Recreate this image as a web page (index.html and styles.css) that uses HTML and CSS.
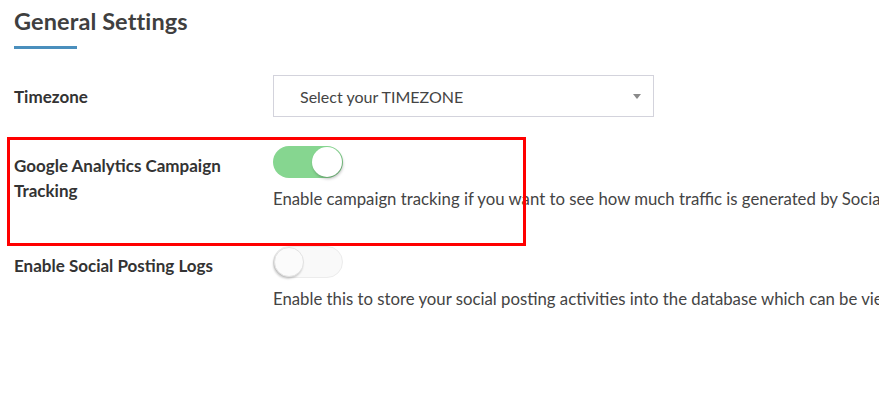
FILE: index.html
```html
<!DOCTYPE html>
<html>
<head>
<meta charset="utf-8">
<link rel="stylesheet" href="styles.css">
</head>
<body>
<div class="page">
  <h2 class="title">General Settings</h2>
  <div class="title-rule"></div>

  <div class="row row-select">
    <div class="label">Timezone</div>
    <div class="field">
      <div class="select">
        <span class="select-text">Select your TIMEZONE</span>
        <span class="select-arrow"></span>
      </div>
    </div>
  </div>

  <div class="row row-toggle row-ga">
    <div class="label">Google Analytics Campaign<br>Tracking</div>
    <div class="field">
      <div class="toggle on"><span class="knob"></span></div>
      <div class="desc">Enable campaign tracking if you want to see how much traffic is generated by Social Auto Poster and how it performs.</div>
    </div>
  </div>

  <div class="row row-toggle row-logs">
    <div class="label">Enable Social Posting Logs</div>
    <div class="field">
      <div class="toggle off"><span class="knob"></span></div>
      <div class="desc">Enable this to store your social posting activities into the database which can be viewed from the logs page.</div>
    </div>
  </div>
</div>
<div class="highlight"></div>
</body>
</html>
```

FILE: styles.css
```css
html, body {
  margin: 0;
  padding: 0;
  background: #ffffff;
  overflow: hidden;
}
body {
  font-family: "Lato", "Liberation Sans", sans-serif;
  color: #333;
  width: 879px;
  height: 417px;
  position: relative;
}
.page {
  padding: 0 0 0 14px;
}
.title {
  margin: 0;
  padding-top: 7px;
  font-size: 23.5px;
  line-height: 28px;
  font-weight: 700;
  color: #3f3f3f;
  letter-spacing: 0.1px;
}
.title-rule {
  width: 63px;
  height: 3px;
  background: #4a8fbd;
  margin-top: 11px;
}
.row {
  display: grid;
  grid-template-columns: 259px 1fr;
}
.row-select {
  margin-top: 26px;
  align-items: center;
}
.row-ga {
  margin-top: 29px;
}
.row-logs {
  margin-top: 35px;
}
.label {
  font-size: 17px;
  font-weight: 700;
  line-height: 25px;
  color: #333;
}
.row-toggle .label {
  padding-top: 7px;
}
.field {
  min-width: 0;
}
.select {
  height: 40px;
  border: 1px solid #d3d3dc;
  display: flex;
  align-items: center;
  justify-content: space-between;
  padding: 0 12px 0 26px;
  box-sizing: content-box;
  width: 341px;
}
.select-text {
  font-size: 16px;
  color: #444;
}
.select-arrow {
  width: 0;
  height: 0;
  border-left: 4px solid transparent;
  border-right: 4px solid transparent;
  border-top: 5px solid #8a8a8a;
}
.toggle {
  width: 70px;
  height: 32px;
  border-radius: 16px;
  box-sizing: border-box;
  display: flex;
  align-items: center;
  padding: 1px;
}
.toggle.on {
  background: #86d690;
  justify-content: flex-end;
}
.toggle.off {
  background: #f9f9f9;
  border: 1px solid #ececec;
  justify-content: flex-start;
  padding: 0;
}
.knob {
  width: 30px;
  height: 30px;
  border-radius: 50%;
  background: #fff;
  box-sizing: border-box;
}
.toggle.on .knob {
  box-shadow: 1px 2px 3px rgba(0,0,0,0.25);
}
.toggle.off .knob {
  background: #fbfbfb;
  border: 1px solid #e2e2e2;
  box-shadow: -1px 2px 2px rgba(0,0,0,0.18);
}
.desc {
  margin-top: 9px;
  font-size: 16.75px;
  line-height: 24px;
  color: #444;
  white-space: nowrap;
  overflow: hidden;
}
.highlight {
  position: absolute;
  left: 7px;
  top: 137px;
  width: 513px;
  height: 103px;
  border: 3px solid #ff0000;
}
```
